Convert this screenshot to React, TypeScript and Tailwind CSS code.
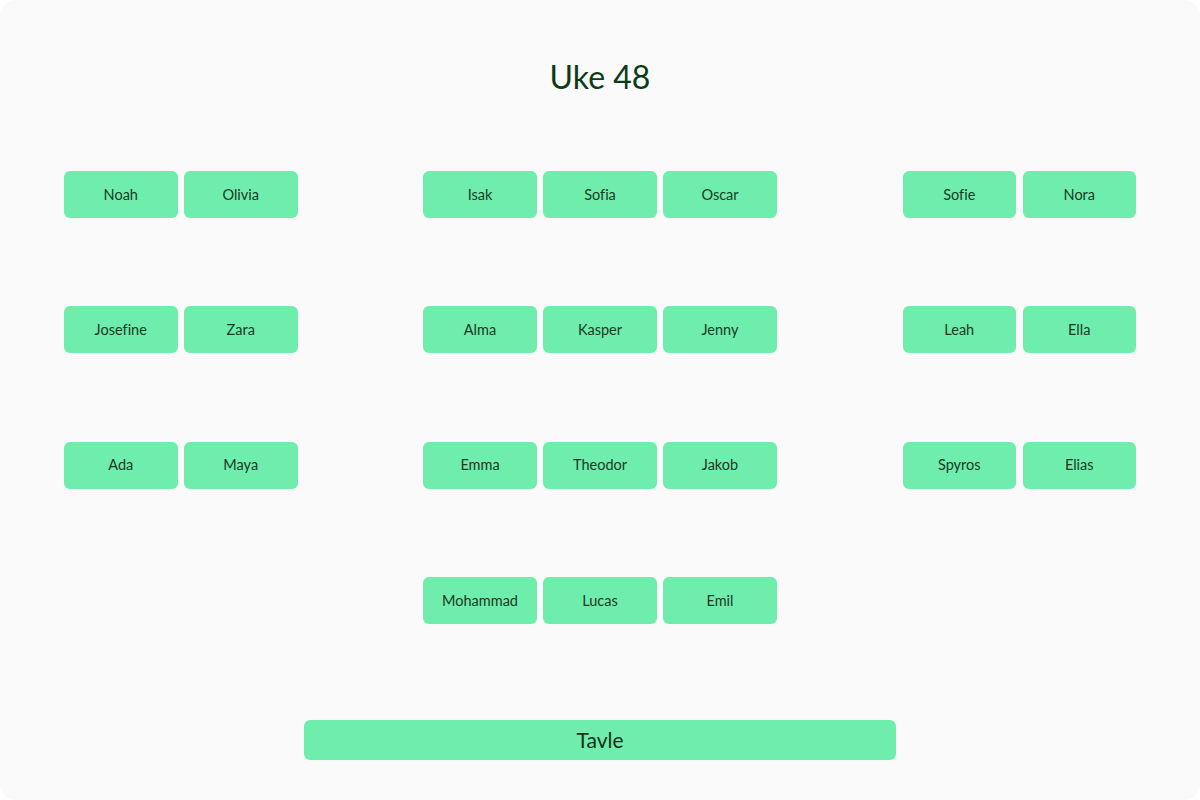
import React from "react";

const left = [["Noah", "Olivia"], ["Josefine", "Zara"], ["Ada", "Maya"]];
const middle = [
  ["Isak", "Sofia", "Oscar"],
  ["Alma", "Kasper", "Jenny"],
  ["Emma", "Theodor", "Jakob"],
  ["Mohammad", "Lucas", "Emil"],
];
const right = [["Sofie", "Nora"], ["Leah", "Ella"], ["Spyros", "Elias"]];

function Seat({ name }: { name: string }) {
  return (
    <div className="w-[113.5px] h-[47px] rounded-[6px] bg-[#6eedac] flex items-center justify-center text-[14.5px] text-[#1b3a26]">
      {name}
    </div>
  );
}

function Column({ groups }: { groups: string[][] }) {
  return (
    <div className="flex flex-col gap-[88.33px]">
      {groups.map((g, i) => (
        <div key={i} className="flex gap-[6.5px]">
          {g.map((n) => (
            <Seat key={n} name={n} />
          ))}
        </div>
      ))}
    </div>
  );
}

export default function App() {
  return (
    <div
      className="w-[1200px] h-[800px] bg-white [font-variant-ligatures:none]"
      style={{ fontFamily: "Lato, 'Noto Sans', sans-serif" }}
    >
      <div className="w-full h-full rounded-[16px] bg-[#fafafa] flex flex-col px-16">
        <h1 className="mt-[58px] h-[38px] text-center text-[32px] leading-[38px] text-[#0d3b17]">Uke 48</h1>
        <div className="mt-[75px] flex justify-between items-start">
          <Column groups={left} />
          <Column groups={middle} />
          <Column groups={right} />
        </div>
        <div className="mt-[96px] flex justify-center">
          <div className="w-[592px] h-[40px] rounded-[6px] bg-[#6eedac] flex items-center justify-center text-[21px] text-[#14301c]">
            Tavle
          </div>
        </div>
      </div>
    </div>
  );
}
